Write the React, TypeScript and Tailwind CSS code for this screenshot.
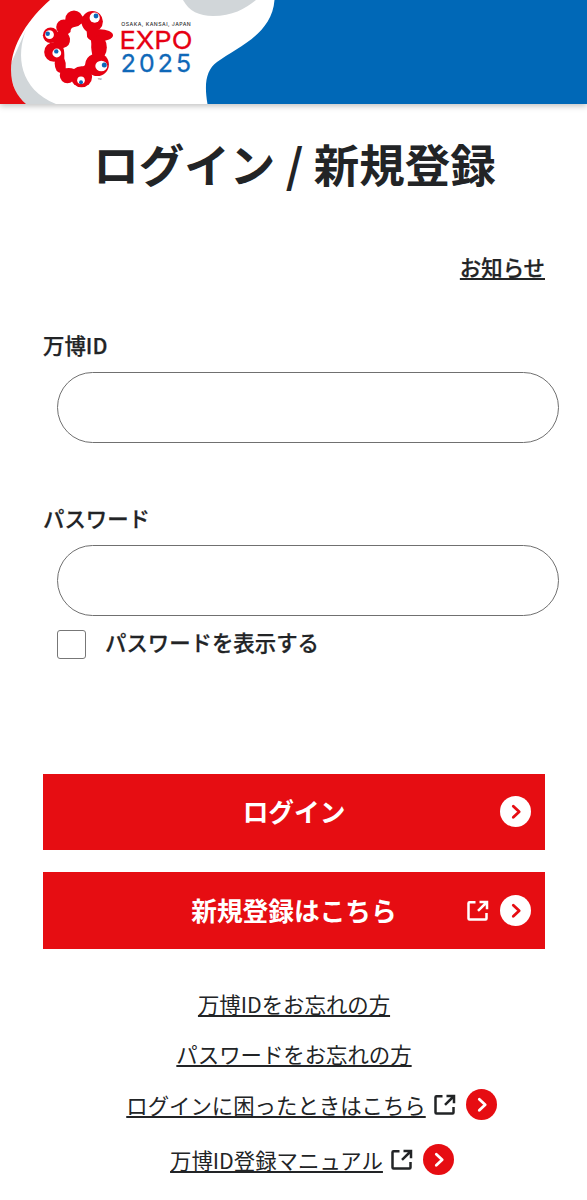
import { useState } from "react";

function ExpoMark() {
    return (
        <>
            <g fill="#e60012">
                <circle cx="74" cy="19.2" r="8.7" />
                <circle cx="92.3" cy="21.5" r="10.6" />
                <ellipse cx="99.6" cy="35.3" rx="13.4" ry="6" />
                <ellipse cx="98.8" cy="47.5" rx="8" ry="12" />
                <circle cx="97.3" cy="64.5" r="11.6" />
                <circle cx="81.5" cy="76.7" r="10.6" />
                <circle cx="67.4" cy="75.6" r="7.6" />
                <ellipse cx="60.5" cy="63.5" rx="5.8" ry="9.5" />
                <circle cx="54" cy="52" r="9.8" />
                <circle cx="50.7" cy="35.2" r="7.8" />
                <circle cx="61.5" cy="39.5" r="8.4" />
                <circle cx="63.8" cy="27" r="7.6" />
                <path d="M64 22L84 16L96 30L96 66L86 76L66 76L58 64L56 40Z" />
            </g>
            <path
                d="M70.5 32Q70.3 27.3 74.5 27Q78.5 26.8 81.5 23.5Q83 29 86.7 31.5L87 35.5Q86.5 38 91 40.5Q91.5 44 91.2 47.5Q91.5 51 92.2 54.5Q86 57 85.2 64Q85.2 66.3 81.5 66.3Q77 66.5 74 69Q70.5 67.5 65.7 68.3Q66.5 63 64.3 58.5Q64.6 51 63.3 48Q70.5 46.5 70 38.5Q69.3 35.5 68 34Z"
                fill="#fff"
            />
            <g fill="#fff">
                <circle cx="94.7" cy="17.7" r="5.1" />
                <circle cx="49.5" cy="34.7" r="4.4" />
                <circle cx="56.8" cy="53" r="4.4" />
                <ellipse cx="101.3" cy="66" rx="6" ry="5.2" />
                <circle cx="81" cy="80.3" r="3.8" />
            </g>
            <g fill="#0f68b8">
                <circle cx="96" cy="16" r="2.4" />
                <circle cx="47.7" cy="33.7" r="2.2" />
                <circle cx="56.3" cy="51.4" r="2.2" />
                <circle cx="104.3" cy="65" r="2.5" />
                <circle cx="81" cy="82.3" r="2" />
            </g>
        </>
    );
}

function Header() {
    return (
        <header className="h-[104px] w-full shadow-[0_2px_6px_rgba(0,0,0,0.25)]">
            <svg className="block" width="587" height="104" viewBox="0 0 587 104" role="img" aria-label="EXPO 2025">
                <rect width="587" height="104" fill="#fff" />
                <path d="M26 30C16 55 19 89 56 104H20L8 70Z" fill="#d1d6d9" />
                <path d="M0 0H50C29 18 11 45 11 70C11 86 17 96 26 104H0Z" fill="#e60d12" />
                <path d="M183 0C189 11 199 16 213 16C232 16 245 9 256 0Z" fill="#d1d6d9" />
                <path d="M274.5 0C272 34 238 47 217 62C206 70 204 84 207.5 104H587V0Z" fill="#0068b7" />
                <ExpoMark />
                <g fontFamily="Inter, 'Liberation Sans', sans-serif">
                    <text x="121.3" y="26.3" fontSize="5.2" fontWeight="500" fill="#333" textLength="69.5" lengthAdjust="spacing">OSAKA, KANSAI, JAPAN</text>
                    <text x="119.5" y="49.2" fontSize="24.8" fontWeight="400" fill="#e60012" stroke="#e60012" strokeWidth="0.3" textLength="73" lengthAdjust="spacingAndGlyphs">EXPO</text>
                    <text x="120.7" y="72" fontSize="24.8" fontWeight="400" fill="#0f68b8" stroke="#0f68b8" strokeWidth="0.3" textLength="70.5" lengthAdjust="spacing">2025</text>
                    <text x="97.7" y="80.3" fontSize="2.5" fill="#555">TM</text>
                </g>
            </svg>
        </header>
    );
}

function ExternalIcon() {
    return (
        <svg className="block shrink-0" width="22" height="22" viewBox="0 0 22 22" fill="none" stroke="currentColor" strokeWidth="2.5">
            <path d="M8.5 2.3H2.5Q1.5 2.3 1.5 3.3V18.5Q1.5 19.5 2.5 19.5H18.5Q19.5 19.5 19.5 18.5V13" />
            <path d="M12.5 2H20V9.3M20 2L11 10.8" />
        </svg>
    );
}

function ArrowIcon({ className }: { className: string }) {
    return (
        <span className={`flex size-[31px] shrink-0 items-center justify-center rounded-full ${className}`}>
            <svg width="31" height="31" viewBox="0 0 31 31" fill="none" stroke="currentColor" strokeWidth="2.8" strokeLinecap="round" strokeLinejoin="round">
                <path d="M13.3 10.2L19.2 15.7L13.3 21.2" />
            </svg>
        </span>
    );
}

const linkText = "underline decoration-[1.5px] underline-offset-2";

export default function App() {
    const [showPassword, setShowPassword] = useState(false);

    return (
        <div className="min-h-[1200px] w-[587px] overflow-hidden bg-white font-['Noto_Sans_CJK_JP',sans-serif] text-[21.4px] leading-8 text-[#222426]">
            <Header />
            <main className="pr-[42px] pl-[43px]">
                <h1 className="pt-[25px] pl-px text-center text-[45.5px] leading-[68px] font-bold">ログイン / 新規登録</h1>
                <div className="mt-[54px] text-right">
                    <a href="#" className={`font-medium [-webkit-text-stroke:0.25px] ${linkText}`}>お知らせ</a>
                </div>

                <form onSubmit={(e) => e.preventDefault()}>
                    <label htmlFor="expo-id" className="mt-[46px] block font-medium [-webkit-text-stroke:0.25px]">万博ID</label>
                    <input
                        id="expo-id"
                        className="mt-[11px] ml-[14px] block h-[71px] w-[502px] rounded-full border border-[#707070] px-8 outline-none"
                    />

                    <label htmlFor="password" className="mt-[59px] block font-medium [-webkit-text-stroke:0.25px]">パスワード</label>
                    <input
                        id="password"
                        type={showPassword ? "text" : "password"}
                        className="mt-[11px] ml-[14px] block h-[71px] w-[502px] rounded-full border border-[#707070] px-8 outline-none"
                    />
                    <label className="mt-[10px] ml-[14px] flex items-start gap-[19px] font-medium [-webkit-text-stroke:0.25px]">
                        <input
                            type="checkbox"
                            checked={showPassword}
                            onChange={(e) => setShowPassword(e.target.checked)}
                            className="mt-1 size-[29px] appearance-none rounded-[3px] border-[1.5px] border-[#777] checked:bg-[#e60d12]"
                        />
                        パスワードを表示する
                    </label>

                    <div className="mt-[114.5px] flex flex-col gap-[22px] text-[25.7px] font-bold text-white">
                        <button className="grid h-[76.7px] grid-cols-[1fr_auto_1fr] items-center bg-[#e60d12] px-[14px]">
                            <span className="col-start-2 pb-[2px]">ログイン</span>
                            <span className="flex justify-end">
                                <ArrowIcon className="bg-white text-[#e60d12]" />
                            </span>
                        </button>
                        <button className="grid h-[76.7px] grid-cols-[1fr_auto_1fr] items-center bg-[#e60d12] px-[14px]">
                            <span className="col-start-2 pb-[2px]">新規登録はこちら</span>
                            <span className="flex items-center justify-end gap-[11px]">
                                <ExternalIcon />
                                <ArrowIcon className="bg-white text-[#e60d12]" />
                            </span>
                        </button>
                    </div>
                </form>

                <nav className="mt-[39px] flex flex-col items-center">
                    <a href="#" className={linkText}>万博IDをお忘れの方</a>
                    <a href="#" className={`mt-[18px] ${linkText}`}>パスワードをお忘れの方</a>
                    <a href="#" className="mt-[19px] ml-[35px] flex items-center">
                        <span className={linkText}>ログインに困ったときはこちら</span>
                        <span className="mr-[10px] ml-2"><ExternalIcon /></span>
                        <ArrowIcon className="bg-[#e60d12] text-white" />
                    </a>
                    <a href="#" className="mt-[23px] ml-[36px] flex items-center">
                        <span className={linkText}>万博ID登録マニュアル</span>
                        <span className="mr-[10px] ml-2"><ExternalIcon /></span>
                        <ArrowIcon className="bg-[#e60d12] text-white" />
                    </a>
                </nav>
            </main>
        </div>
    );
}
